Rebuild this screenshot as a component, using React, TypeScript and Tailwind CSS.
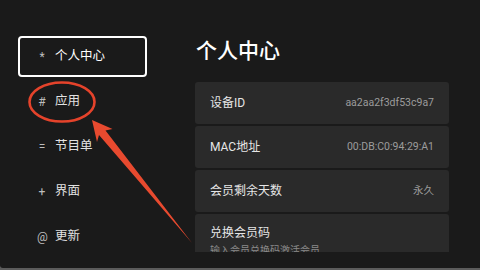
import React from 'react';

const menu = [
  { sym: '*', label: '个人中心' },
  { sym: '#', label: '应用' },
  { sym: '=', label: '节目单' },
  { sym: '+', label: '界面' },
  { sym: '@', label: '更新' },
];

const rows = [
  { label: '设备ID', value: 'aa2aa2f3df53c9a7' },
  { label: 'MAC地址', value: '00:DB:C0:94:29:A1' },
  { label: '会员剩余天数', value: '永久' },
];

const font = { fontFamily: 'Roboto, "Noto Sans CJK SC", sans-serif' };

export default function App() {
  return (
    <div className="relative w-[480px] h-[270px] bg-[#5c5c5c] overflow-hidden" style={font}>
      <div className="flex h-[268px] bg-[#1a1a1a] rounded-bl-[3px]">
        {/* sidebar */}
        <div className="w-[195px] pl-[18px] pt-[36px] flex flex-col gap-[4px]">
          {menu.map((m, i) => (
            <div
              key={m.label}
              className={`w-[129px] h-[41px] flex items-center rounded-[4px] pl-[17px] border-2 ${
                i === 0 ? 'border-white text-white' : 'border-transparent text-[#e2e2e2]'
              }`}
            >
              <span className="w-[10px] text-center text-[12px] text-[#bdbdbd]">{m.sym}</span>
              <span className="ml-[8px] text-[12.5px] leading-none">{m.label}</span>
            </div>
          ))}
        </div>

        {/* content */}
        <div className="w-[254px] h-[252px] overflow-hidden">
          <div className="pt-[36px] h-[82px]">
            <h1 className="text-[21px] leading-[30px] font-medium text-white pl-[1px]">个人中心</h1>
          </div>
          <div className="flex flex-col gap-[2px]">
            {rows.map((r) => (
              <div
                key={r.label}
                className="h-[42px] bg-[#2a2a2a] rounded-[3px] flex items-center justify-between px-[15px]"
              >
                <span className="text-[12px] text-[#e6e6e6]">{r.label}</span>
                <span className="text-[10.5px] text-[#9c9c9c]">{r.value}</span>
              </div>
            ))}
            <div className="h-[60px] bg-[#2a2a2a] rounded-[3px] px-[15px] pt-[11px]">
              <div className="text-[12px] leading-[17px] text-[#e6e6e6]">兑换会员码</div>
              <div className="text-[10px] leading-[15px] text-[#8a8a8a] mt-[1px]">输入会员兑换码激活会员</div>
            </div>
          </div>
        </div>
      </div>

      {/* annotation */}
      <svg className="absolute inset-0 pointer-events-none" width="480" height="270" viewBox="0 0 480 270">
        <ellipse cx="62" cy="102" rx="32.5" ry="19.5" fill="none" stroke="#e5432b" strokeWidth="2.6" />
        <polygon
          points="92,120 112.5,129 105.5,130.5 192,243 99,135 97,142"
          fill="#e84a2f"
        />
      </svg>
    </div>
  );
}
